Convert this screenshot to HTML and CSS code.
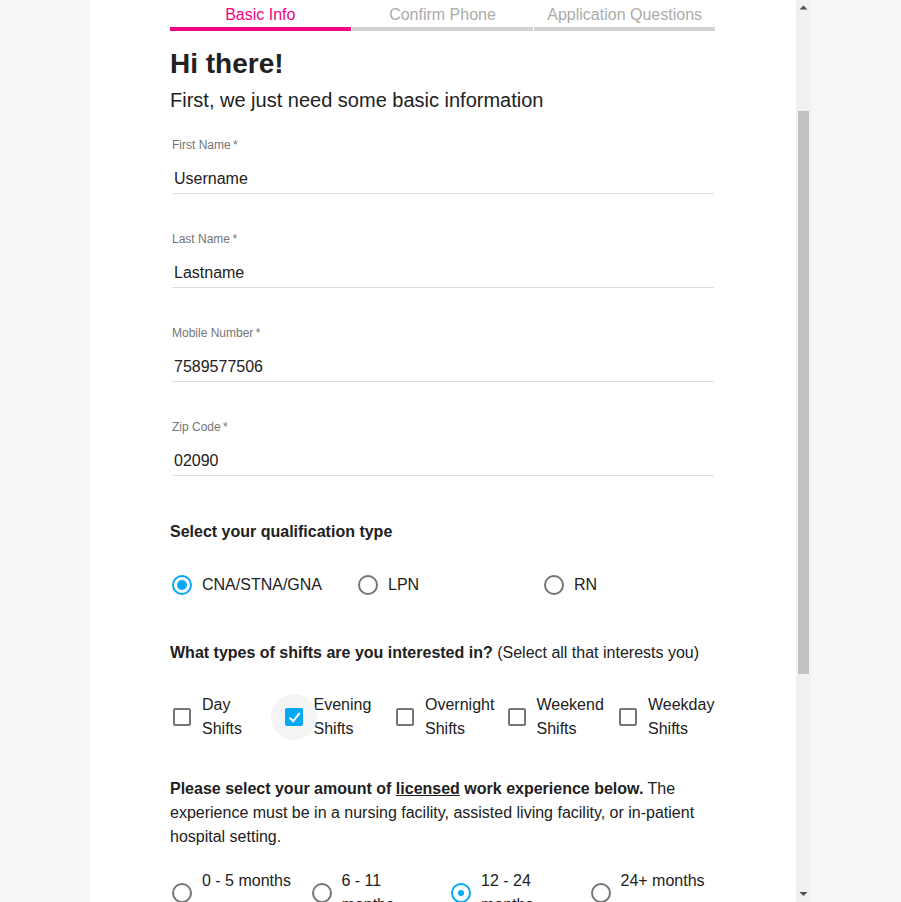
FILE: index.html
```html
<!DOCTYPE html>
<html lang="en">
<head>
<meta charset="utf-8">
<title>Basic Info</title>
<link rel="stylesheet" href="styles.css">
</head>
<body>
<div class="page">
  <main class="main">
    <nav class="tabs">
      <div class="tab active">Basic Info</div>
      <div class="tab">Confirm Phone</div>
      <div class="tab">Application Questions</div>
    </nav>

    <h1 class="title">Hi there!</h1>
    <p class="subtitle">First, we just need some basic information</p>

    <div class="fields">
      <div class="field">
        <label class="field-label">First Name&thinsp;*</label>
        <div class="field-input">Username</div>
      </div>
      <div class="field">
        <label class="field-label">Last Name&thinsp;*</label>
        <div class="field-input">Lastname</div>
      </div>
      <div class="field">
        <label class="field-label">Mobile Number&thinsp;*</label>
        <div class="field-input">7589577506</div>
      </div>
      <div class="field">
        <label class="field-label">Zip Code&thinsp;*</label>
        <div class="field-input">02090</div>
      </div>
    </div>

    <h2 class="q-title q-qual">Select your qualification type</h2>
    <div class="options options-3">
      <label class="opt"><span class="icon-wrap"><span class="radio checked"></span></span><span class="opt-text">CNA/STNA/GNA</span></label>
      <label class="opt"><span class="icon-wrap"><span class="radio"></span></span><span class="opt-text">LPN</span></label>
      <label class="opt"><span class="icon-wrap"><span class="radio"></span></span><span class="opt-text">RN</span></label>
    </div>

    <h2 class="q-title q-shifts">What types of shifts are you interested in? <span class="normal">(Select all that interests you)</span></h2>
    <div class="options options-5">
      <label class="opt"><span class="icon-wrap"><span class="checkbox"></span></span><span class="opt-text">Day<br>Shifts</span></label>
      <label class="opt"><span class="icon-wrap halo"><span class="checkbox checked"><svg class="check" width="14" height="14" viewBox="0 0 14 14"><polyline points="2.6,7.6 6.2,11.2 12.6,3.2" fill="none" stroke="#fff" stroke-width="2"/></svg></span></span><span class="opt-text">Evening<br>Shifts</span></label>
      <label class="opt"><span class="icon-wrap"><span class="checkbox"></span></span><span class="opt-text">Overnight<br>Shifts</span></label>
      <label class="opt"><span class="icon-wrap"><span class="checkbox"></span></span><span class="opt-text">Weekend<br>Shifts</span></label>
      <label class="opt"><span class="icon-wrap"><span class="checkbox"></span></span><span class="opt-text">Weekday<br>Shifts</span></label>
    </div>

    <p class="para"><strong>Please select your amount of <u>licensed</u> work experience below.</strong> The experience must be in a nursing facility, assisted living facility, or in-patient hospital setting.</p>
    <div class="options options-4">
      <label class="opt exp"><span class="icon-wrap"><span class="radio"></span></span><span class="opt-text">0 - 5 months</span></label>
      <label class="opt exp"><span class="icon-wrap"><span class="radio"></span></span><span class="opt-text">6 - 11 months</span></label>
      <label class="opt exp"><span class="icon-wrap"><span class="radio checked small"></span></span><span class="opt-text">12 - 24 months</span></label>
      <label class="opt exp"><span class="icon-wrap"><span class="radio"></span></span><span class="opt-text">24+ months</span></label>
    </div>
  </main>

  <div class="scrollbar">
    <div class="sb-btn"><svg width="15" height="15" viewBox="0 0 15 15"><polygon points="3.5,9.5 11.5,9.5 7.5,5.5" fill="#505050"/></svg></div>
    <div class="sb-track"><div class="sb-thumb"></div></div>
    <div class="sb-btn"><svg width="15" height="15" viewBox="0 0 15 15"><polygon points="3.5,5 11.5,5 7.5,9" fill="#505050"/></svg></div>
  </div>
</div>
</body>
</html>
```

FILE: styles.css
```css
* {
  box-sizing: border-box;
}

html,
body {
  margin: 0;
  height: 902px;
  overflow: hidden;
}

body {
  background: #f6f6f6;
  font-family: "Liberation Sans", Arial, sans-serif;
  color: #212121;
}

.page {
  display: flex;
  margin-left: 90px;
  width: 721px;
  height: 902px;
}

.main {
  width: 706px;
  height: 902px;
  background: #fff;
  padding: 0 81px 0 80px;
  overflow: hidden;
}

/* Tabs */
.tabs {
  display: grid;
  grid-template-columns: repeat(3, 1fr);
  column-gap: 1.5px;
}

.tab {
  padding-top: 3px;
  font-size: 16px;
  line-height: 24px;
  text-align: center;
  color: #ababab;
  border-bottom: 4px solid #d3d3d3;
}

.tab.active {
  color: #f2037f;
  border-bottom-color: #f2037f;
}

/* Heading */
.title {
  margin: 16px 0 0;
  font-size: 28px;
  line-height: 34px;
  font-weight: 700;
}

.subtitle {
  margin: 7px 0 0;
  font-size: 20px;
  line-height: 24px;
}

/* Text fields */
.fields {
  margin: 26px 1px 0 2px;
  display: flex;
  flex-direction: column;
  gap: 38px;
}

.field-label {
  display: block;
  font-size: 12px;
  line-height: 14px;
  color: #757575;
}

.field-input {
  margin-top: 17px;
  font-size: 16px;
  line-height: 19px;
  padding: 0 0 5px 2px;
  border-bottom: 1px solid #dedede;
}

/* Questions */
.q-title {
  margin: 0;
  font-size: 16px;
  line-height: 24px;
  font-weight: 700;
}

.q-title .normal {
  font-weight: 400;
}

.q-qual {
  margin-top: 44px;
}

.q-shifts {
  margin-top: 35.5px;
}

.options {
  display: grid;
}

.options-3 {
  grid-template-columns: repeat(3, 186px);
  margin-top: 19.5px;
}

.options-5 {
  grid-template-columns: repeat(5, 111.5px);
  margin-top: 28px;
}

.options-4 {
  grid-template-columns: repeat(4, 139.5px);
  margin-top: 20px;
}

.opt {
  display: flex;
  align-items: center;
  min-height: 42px;
  font-size: 16px;
  line-height: 24px;
}

.opt.exp .opt-text {
  align-self: flex-start;
  width: 93px;
}

.icon-wrap {
  position: relative;
  flex: none;
  width: 24px;
  height: 24px;
  margin-right: 8px;
  display: flex;
  align-items: center;
  justify-content: center;
}

.icon-wrap.halo::before {
  content: "";
  position: absolute;
  left: 50%;
  top: 50%;
  width: 46px;
  height: 46px;
  margin: -23px 0 0 -23px;
  border-radius: 50%;
  background: #f4f4f4;
}

.radio {
  position: relative;
  width: 20px;
  height: 20px;
  border: 2px solid #757575;
  border-radius: 50%;
  display: flex;
  align-items: center;
  justify-content: center;
}

.radio.checked {
  border-color: #03a9f4;
}

.radio.checked::after {
  content: "";
  width: 10px;
  height: 10px;
  border-radius: 50%;
  background: #03a9f4;
}

.radio.checked.small::after {
  width: 6px;
  height: 6px;
}

.checkbox {
  position: relative;
  width: 18px;
  height: 18px;
  border: 2px solid #757575;
  border-radius: 2px;
}

.checkbox.checked {
  background: #03a9f4;
  border-color: #03a9f4;
}

.check {
  display: block;
}

.para {
  margin: 36px 0 0;
  font-size: 16px;
  line-height: 24px;
}

/* Scrollbar */
.scrollbar {
  width: 15px;
  height: 902px;
  display: flex;
  flex-direction: column;
  background: #f1f1f1;
}

.sb-btn {
  height: 15px;
  flex: none;
}

.sb-btn svg {
  display: block;
}

.sb-track {
  flex: 1;
  padding: 96px 2px 0;
}

.sb-thumb {
  height: 563px;
  background: #c1c1c1;
}
```
